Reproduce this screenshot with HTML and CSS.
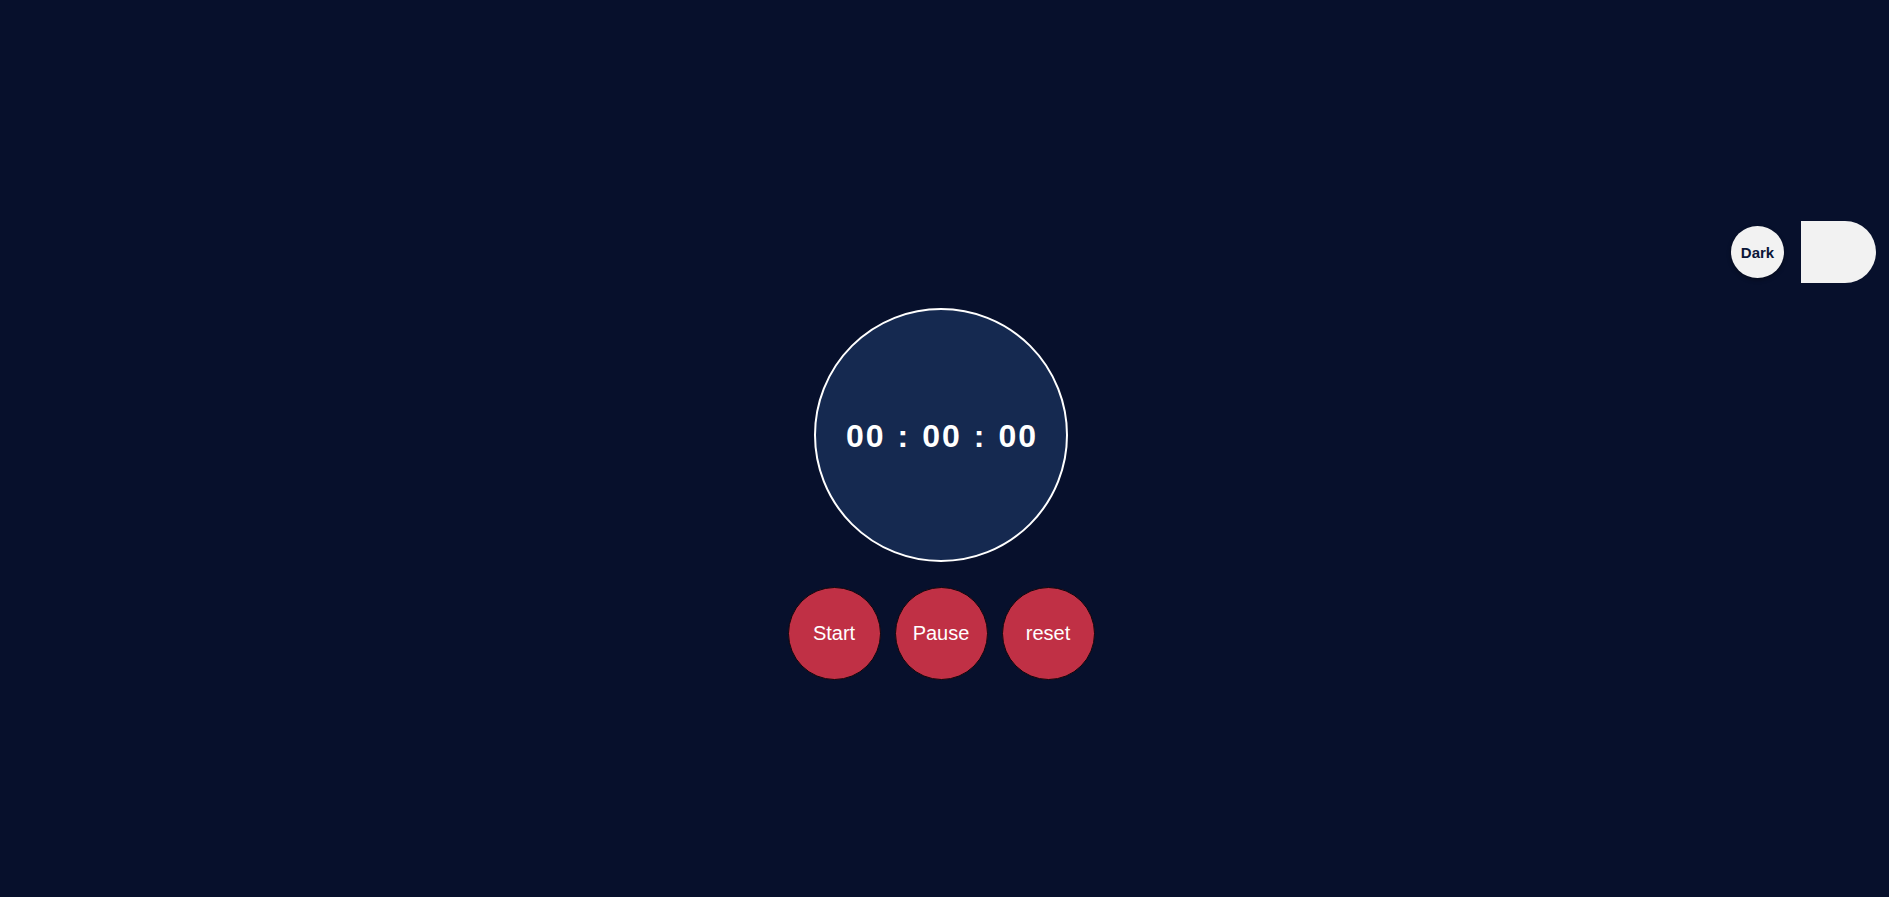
FILE: index.html
```html
<!DOCTYPE html>
<html lang="en">
<head>
<meta charset="utf-8">
<title>Stopwatch</title>
<link rel="stylesheet" href="styles.css">
</head>
<body>
<div class="theme-toggle">
  <div class="knob">Dark</div>
  <div class="track"></div>
</div>
<main class="stopwatch">
  <div class="dial">
    <div class="time">
      <span class="seg">00</span>
      <span class="sep">:</span>
      <span class="seg">00</span>
      <span class="sep">:</span>
      <span class="seg">00</span>
    </div>
  </div>
  <div class="controls">
    <button class="btn">Start</button>
    <button class="btn">Pause</button>
    <button class="btn">reset</button>
  </div>
</main>
</body>
</html>
```
FILE: styles.css
```css
html, body {
  margin: 0;
  padding: 0;
  height: 100%;
}
body {
  background: #07102c;
  font-family: "Liberation Sans", Arial, sans-serif;
  overflow: hidden;
}
.theme-toggle {
  position: absolute;
  top: 221px;
  right: 13px;
  display: flex;
  align-items: center;
  gap: 17px;
}
.knob {
  width: 53px;
  height: 52px;
  border-radius: 50%;
  background: #f2f2f2;
  box-shadow: 0 2px 4px rgba(0, 0, 0, 0.35);
  display: flex;
  align-items: center;
  justify-content: center;
  font-weight: bold;
  font-size: 15px;
  color: #0b1638;
}
.track {
  width: 75px;
  height: 62px;
  background: #f2f2f2;
  border-radius: 0 31px 31px 0;
}
.stopwatch {
  display: flex;
  flex-direction: column;
  align-items: center;
  padding-top: 308px;
  padding-right: 7px;
  gap: 25px;
}
.dial {
  width: 250px;
  height: 250px;
  border: 2px solid #ffffff;
  border-radius: 50%;
  background: #152950;
  display: flex;
  align-items: center;
  justify-content: center;
}
.time {
  display: flex;
  align-items: baseline;
  gap: 14px;
  margin-top: 3px;
  color: #ffffff;
  font-weight: bold;
  font-size: 32px;
}
.seg {
  letter-spacing: 2px;
  margin-right: -2px;
}
.controls {
  display: flex;
  gap: 14px;
}
.btn {
  width: 93px;
  height: 93px;
  border: 1px solid #12060b;
  border-radius: 50%;
  background: #c03045;
  color: #ffffff;
  font-family: "Liberation Sans", Arial, sans-serif;
  font-size: 20px;
  padding: 0;
  box-sizing: border-box;
}
```
